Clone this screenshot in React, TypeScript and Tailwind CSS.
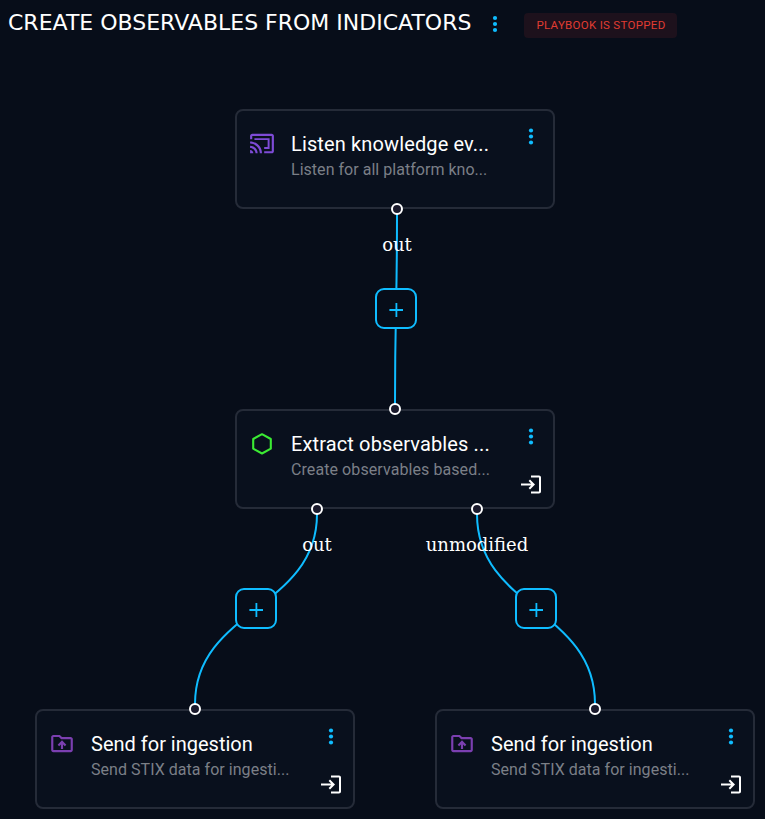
import React from 'react';

type IconName = 'cast' | 'hexagon' | 'folder';

function MoreIcon({ viewBox = '0 0 24 24', className }: { viewBox?: string; className: string }) {
  return (
    <svg viewBox={viewBox} className={className} fill="#0fbcff">
      <circle cx="12" cy="6" r="2.1" />
      <circle cx="12" cy="12" r="2.1" />
      <circle cx="12" cy="18" r="2.1" />
    </svg>
  );
}

function LoginIcon() {
  return (
    <svg viewBox="0 -0.5 24 24" className="size-6" fill="#fff">
      <path d="M11 7 9.6 8.4l2.6 2.6H2v2h10.2l-2.6 2.6L11 17l5-5-5-5zm9 12h-8v2h8c1.1 0 2-.9 2-2V5c0-1.1-.9-2-2-2h-8v2h8v14z" />
    </svg>
  );
}

function NodeIcon({ name }: { name: IconName }) {
  if (name === 'cast') {
    return (
      <svg viewBox="0 0.4 24 24" className="size-[26px]" fill="#7e4bd6">
        <path d="M1 18v3h3c0-1.66-1.34-3-3-3zm0-4v2c2.76 0 5 2.24 5 5h2c0-3.87-3.13-7-7-7zm0-4v2c4.97 0 9 4.03 9 9h2c0-6.08-4.93-11-11-11zm20-7H3c-1.1 0-2 .9-2 2v3h2V5h18v14h-7v2h7c1.1 0 2-.9 2-2V5c0-1.1-.9-2-2-2z" />
        <path d="M5 7h14v10h-5v-1.8h3.2V8.8H5z" />
      </svg>
    );
  }
  if (name === 'hexagon') {
    return (
      <svg viewBox="0 0.4 26 26" className="size-[26px]" fill="none" stroke="#3bea33" strokeWidth="2.1">
        <path d="M13 3.6 21.8 8.4v9.7L13 22.9 4.2 18.1V8.4z" strokeLinejoin="round" />
      </svg>
    );
  }
  return (
    <svg viewBox="0 0.4 24 24" className="size-[26px]" fill="#7b3fb0">
      <path d="M20 6h-8l-2-2H4c-1.1 0-1.99.9-1.99 2L2 18c0 1.1.9 2 2 2h16c1.1 0 2-.9 2-2V8c0-1.1-.9-2-2-2zm0 12H4V6h5.17l2 2H20v10zM9.41 14.42 11 12.84V17h2v-4.16l1.59 1.59L16 13.01 12.01 9 8 13.01z" />
    </svg>
  );
}

interface CardProps {
  place: string;
  icon: IconName;
  title: string;
  titleClass: string;
  text: string;
  textClass: string;
  input?: boolean;
}

function Card({ place, icon, title, titleClass, text, textClass, input }: CardProps) {
  return (
    <div
      className={`absolute flex h-[100px] w-[320px] rounded-lg border-2 border-[#252b38] bg-[#09101d] ${place}`}
    >
      <div className="ml-3 mt-5 w-[42px] shrink-0">
        <NodeIcon name={icon} />
      </div>
      <div className="mt-5 w-[205px] shrink-0 whitespace-nowrap">
        <div className={`text-[20px] leading-[26px] text-white ${titleClass}`}>{title}</div>
        <div className={`text-[16px] leading-[26px] text-[#7b7f87] ${textClass}`}>{text}</div>
      </div>
      <div className="ml-[23px] mt-[13px] flex flex-col gap-6">
        <MoreIcon viewBox="0 -0.5 24 24" className="size-6" />
        {input && <LoginIcon />}
      </div>
    </div>
  );
}

function Handle({ place }: { place: string }) {
  return <div className={`absolute size-3 rounded-full border-2 border-white bg-[#1a192b] ${place}`} />;
}

function AddButton({ place }: { place: string }) {
  return (
    <div
      className={`absolute flex h-[41px] w-[42px] items-center justify-center rounded-[9px] border-2 border-[#0fbcff] bg-[#070d19] ${place}`}
    >
      <svg viewBox="0 0 14 14" className="mt-[3px] size-[14px]" stroke="#0fbcff" strokeWidth="1.8">
        <path d="M7.4 0v14M0.4 7H14" />
      </svg>
    </div>
  );
}

function EdgeLabel({ place, children }: { place: string; children: string }) {
  return (
    <div
      className={`absolute -translate-x-1/2 whitespace-nowrap font-['DejaVu_Serif',serif] text-[18px] leading-6 text-white ${place}`}
    >
      {children}
    </div>
  );
}

export default function App() {
  return (
    <div className="relative h-[819px] w-[765px] overflow-hidden bg-[#070d19] font-['Roboto',sans-serif]">
      <header className="flex items-start pl-2">
        <h1 className="mt-2 w-[475px] whitespace-nowrap font-['DejaVu_Sans',sans-serif] text-[22px] leading-[30px] text-white">
          CREATE OBSERVABLES FROM INDICATORS
        </h1>
        <MoreIcon className="mt-3 size-6" />
        <div className="ml-[17px] mt-[13px] flex h-[25px] w-[153px] items-center justify-center whitespace-nowrap rounded bg-[#1d111c] pl-px pt-px text-[11.5px] tracking-[0.3px] text-[#e03c32]">
          PLAYBOOK IS STOPPED
        </div>
      </header>

      <main>
        <Card
          place="left-[235px] top-[109px]"
          icon="cast"
          title="Listen knowledge ev..."
          titleClass="tracking-[0.13px]"
          text="Listen for all platform kno..."
          textClass="tracking-[0.03px]"
        />
        <Card
          place="left-[235px] top-[409px]"
          icon="hexagon"
          title="Extract observables ..."
          titleClass="tracking-[0.13px]"
          text="Create observables based..."
          textClass="tracking-[0.08px]"
          input
        />
        <Card
          place="left-[35px] top-[709px]"
          icon="folder"
          title="Send for ingestion"
          titleClass=""
          text="Send STIX data for ingesti..."
          textClass="tracking-[0.04px]"
          input
        />
        <Card
          place="left-[435px] top-[709px]"
          icon="folder"
          title="Send for ingestion"
          titleClass=""
          text="Send STIX data for ingesti..."
          textClass="tracking-[0.04px]"
          input
        />

        <svg
          viewBox="0 0 765 819"
          className="absolute left-0 top-0 h-[819px] w-[765px]"
          fill="none"
          stroke="#0fbcff"
          strokeWidth="2"
        >
          <path d="M397 214C397 309 395 309 395 404" />
          <path d="M317 514C317 609 195 609 195 704" />
          <path d="M477 514C477 609 595 609 595 704" />
        </svg>

        <Handle place="left-[391px] top-[203px]" />
        <Handle place="left-[389px] top-[403px]" />
        <Handle place="left-[311px] top-[503px]" />
        <Handle place="left-[471px] top-[503px]" />
        <Handle place="left-[189px] top-[703px]" />
        <Handle place="left-[589px] top-[703px]" />

        <AddButton place="left-[375px] top-[288px]" />
        <AddButton place="left-[235px] top-[588px]" />
        <AddButton place="left-[515px] top-[588px]" />

        <EdgeLabel place="left-[397px] top-[233px]">out</EdgeLabel>
        <EdgeLabel place="left-[317px] top-[533px]">out</EdgeLabel>
        <EdgeLabel place="left-[477px] top-[533px]">unmodified</EdgeLabel>
      </main>
    </div>
  );
}
